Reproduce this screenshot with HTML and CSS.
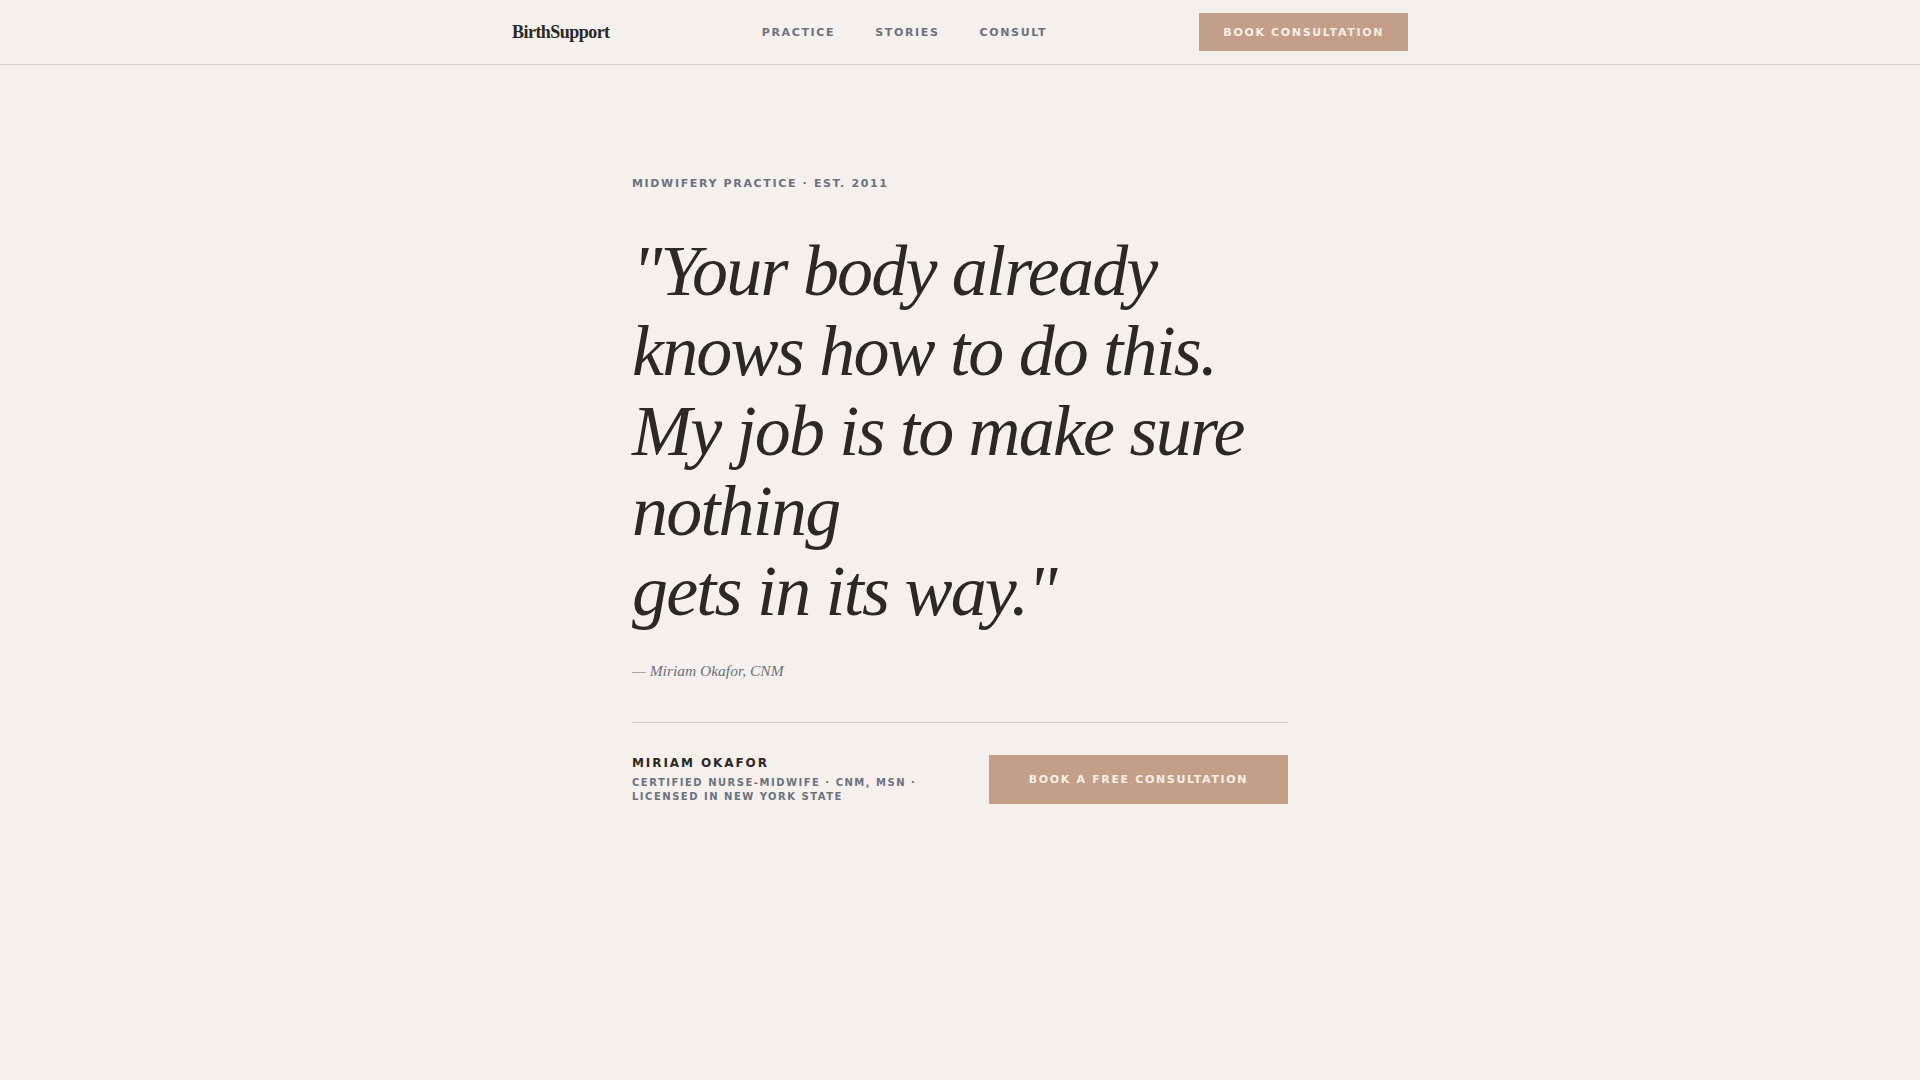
FILE: index.html
```html
<!DOCTYPE html>
<html lang="en">
<head>
<meta charset="utf-8">
<title>BirthSupport</title>
<link rel="stylesheet" href="styles.css">
</head>
<body>
<header class="site-header">
  <div class="header-inner">
    <a class="logo" href="#">BirthSupport</a>
    <nav class="nav">
      <a href="#">Practice</a>
      <a href="#">Stories</a>
      <a href="#">Consult</a>
    </nav>
    <a class="btn btn-small" href="#">Book Consultation</a>
  </div>
</header>
<main class="hero">
  <p class="eyebrow">Midwifery Practice · Est. 2011</p>
  <blockquote class="quote">"Your body already knows how to do this.<br>My job is to make sure nothing<br>gets in its way."</blockquote>
  <p class="attribution">— Miriam Okafor, CNM</p>
  <div class="signoff">
    <div class="who">
      <p class="name">Miriam Okafor</p>
      <p class="creds">Certified Nurse-Midwife · CNM, MSN · Licensed in New York State</p>
    </div>
    <a class="btn btn-large" href="#">Book a Free Consultation</a>
  </div>
</main>
</body>
</html>
```
FILE: styles.css
```css
* { box-sizing: border-box; }
html, body { margin: 0; padding: 0; }
body {
  background: #f5f0eb;
  color: #2b2826;
  font-family: "DejaVu Sans", sans-serif;
  min-height: 100vh;
}
a { text-decoration: none; }
p { margin: 0; }

.site-header {
  height: 65px;
  border-bottom: 1px solid #d3cdc7;
}
.header-inner {
  max-width: 896px;
  height: 64px;
  margin: 0 auto;
  display: flex;
  align-items: center;
  justify-content: space-between;
}
.logo {
  font-family: "Liberation Serif", serif;
  font-weight: 700;
  font-size: 18px;
  color: #2b2826;
  letter-spacing: -0.03em;
}
.nav {
  display: flex;
  gap: 40px;
}
.nav a {
  font-size: 11px;
  font-weight: 700;
  letter-spacing: 0.15em;
  text-transform: uppercase;
  color: #6b7280;
}
.btn {
  display: inline-flex;
  align-items: center;
  justify-content: center;
  background: #c49f88;
  color: #f7efe9;
  font-weight: 700;
  font-size: 11px;
  text-transform: uppercase;
  letter-spacing: 0.15em;
}
.btn-small {
  height: 38px;
  padding: 0 24px;
}
.btn-large {
  height: 49px;
  width: 299px;
}

.hero {
  max-width: 656px;
  margin: 0 auto;
  padding-top: 111px;
}
.eyebrow {
  font-size: 11px;
  line-height: 16px;
  font-weight: 700;
  letter-spacing: 0.15em;
  text-transform: uppercase;
  color: #6b7280;
}
.quote {
  margin: 39px 0 0;
  font-family: "Liberation Serif", serif;
  font-style: italic;
  font-size: 72px;
  line-height: 80px;
  letter-spacing: -0.025em;
  color: #2b2826;
}
.attribution {
  margin-top: 28px;
  font-family: "Liberation Serif", serif;
  font-style: italic;
  font-size: 15.5px;
  line-height: 24px;
  color: #6b7280;
}
.signoff {
  margin-top: 39px;
  border-top: 1px solid #d3cdc7;
  padding-top: 32px;
  display: flex;
  justify-content: space-between;
  align-items: center;
}
.who { max-width: 300px; }
.name {
  font-size: 12px;
  font-weight: 700;
  letter-spacing: 0.16em;
  text-transform: uppercase;
  color: #2b2826;
  line-height: 16px;
}
.creds {
  margin-top: 5px;
  font-size: 10px;
  line-height: 14px;
  font-weight: 700;
  letter-spacing: 0.15em;
  text-transform: uppercase;
  color: #6b7280;
}
```
